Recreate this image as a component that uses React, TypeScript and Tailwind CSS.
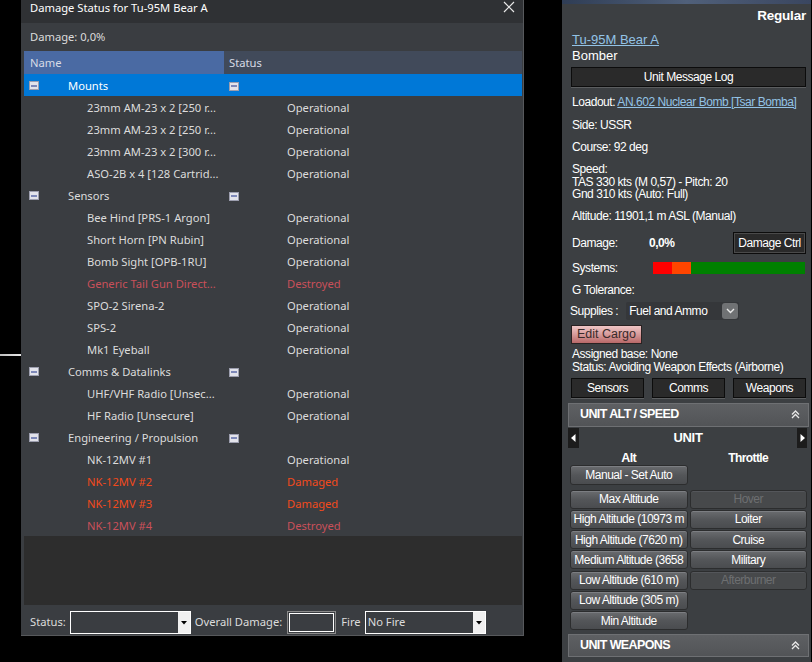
import React from "react";

type Row = { kind: "group" | "item"; name: string; status?: string; color?: string; selected?: boolean };

const DES = "#c9505a";
const DMG = "#f24a1c";

const rows: Row[] = [
  { kind: "group", name: "Mounts", selected: true },
  { kind: "item", name: "23mm AM-23 x 2 [250 r...", status: "Operational" },
  { kind: "item", name: "23mm AM-23 x 2 [250 r...", status: "Operational" },
  { kind: "item", name: "23mm AM-23 x 2 [300 r...", status: "Operational" },
  { kind: "item", name: "ASO-2B x 4 [128 Cartrid...", status: "Operational" },
  { kind: "group", name: "Sensors" },
  { kind: "item", name: "Bee Hind [PRS-1 Argon]", status: "Operational" },
  { kind: "item", name: "Short Horn [PN Rubin]", status: "Operational" },
  { kind: "item", name: "Bomb Sight [OPB-1RU]", status: "Operational" },
  { kind: "item", name: "Generic Tail Gun Direct...", status: "Destroyed", color: DES },
  { kind: "item", name: "SPO-2 Sirena-2", status: "Operational" },
  { kind: "item", name: "SPS-2", status: "Operational" },
  { kind: "item", name: "Mk1 Eyeball", status: "Operational" },
  { kind: "group", name: "Comms & Datalinks" },
  { kind: "item", name: "UHF/VHF Radio [Unsec...", status: "Operational" },
  { kind: "item", name: "HF Radio [Unsecure]", status: "Operational" },
  { kind: "group", name: "Engineering / Propulsion" },
  { kind: "item", name: "NK-12MV #1", status: "Operational" },
  { kind: "item", name: "NK-12MV #2", status: "Damaged", color: DMG },
  { kind: "item", name: "NK-12MV #3", status: "Damaged", color: DMG },
  { kind: "item", name: "NK-12MV #4", status: "Destroyed", color: DES },
];

function MinusBox() {
  return (
    <div className="w-[10px] h-[9px] bg-[#e2e3ea] border border-[#9c9eae] flex items-center justify-center">
      <div className="w-[6px] h-[2px] bg-[#7d88b8]" />
    </div>
  );
}

function DropArrow() {
  return (
    <div className="w-[12px] self-stretch bg-[#f0f0f0] flex items-center justify-center">
      <svg width="6" height="4" viewBox="0 0 6 4">
        <path d="M0 0h6L3 3.5z" fill="#000" />
      </svg>
    </div>
  );
}

function DarkBtn({ children, className = "" }: { children: React.ReactNode; className?: string }) {
  return (
    <div
      className={
        "h-[20px] bg-[#2a2a2a] border border-[#0c0c0c] shadow-[0_1px_0_#5c5e60] flex items-center justify-center text-white " +
        className
      }
    >
      {children}
    </div>
  );
}

function GrayBtn({ children, disabled = false }: { children: React.ReactNode; disabled?: boolean }) {
  return (
    <div
      className={
        "h-[19px] rounded-[3px] border border-[#2c2d2e] flex items-center justify-center overflow-hidden whitespace-nowrap tracking-[-0.5px] " +
        (disabled
          ? "bg-[#47494b] text-[#6d6f71] shadow-[inset_0_1px_0_#54565a]"
          : "bg-gradient-to-b from-[#6a6c6f] via-[#545659] to-[#4a4c4f] text-white shadow-[inset_0_1px_0_#7c7e82]")
      }
    >
      {children}
    </div>
  );
}

function DoubleChevron() {
  return (
    <svg width="9" height="9" viewBox="0 0 9 9" fill="none" stroke="#e8e8e8" strokeWidth="1.3">
      <path d="M1 4.5L4.5 1L8 4.5" />
      <path d="M1 8L4.5 4.5L8 8" />
    </svg>
  );
}

function SectionHeader({ title, h }: { title: string; h: string }) {
  return (
    <div
      className={
        h +
        " ml-[6px] mr-[2px] bg-gradient-to-b from-[#5e6063] to-[#525457] border border-[#6e7073] flex items-center justify-between pl-[11px] pr-[8px]"
      }
    >
      <span className="font-bold text-white text-[12.5px] tracking-[-0.6px]">{title}</span>
      <DoubleChevron />
    </div>
  );
}

export default function App() {
  return (
    <div className="w-[812px] h-[662px] bg-black flex overflow-hidden">
      {/* map area left */}
      <div className="w-[21px] shrink-0">
        <div className="mt-[354px] h-[2px] bg-gradient-to-r from-[#bdbdbd] to-[#e8e8e8]" />
      </div>

      {/* dialog */}
      <div className="w-[503px] h-[636px] shrink-0 bg-[#3a3d41] border-r border-b border-[#57595c] flex flex-col font-['Noto_Sans',sans-serif] text-[11.2px] text-[#dcdcdc]">
        <div className="h-[23px] bg-[#2f3134] flex items-start justify-between pl-[9px] pr-[8px]">
          <span className="leading-[16px] text-white">Damage Status for Tu-95M Bear A</span>
          <svg width="12" height="12" viewBox="0 0 12 12" className="mt-[1px]" stroke="#e8e8e8" strokeWidth="1.2">
            <path d="M1 1L11 11M11 1L1 11" />
          </svg>
        </div>
        <div className="h-[28px] flex items-center pl-[9px] pt-[1px]">Damage: 0,0%</div>

        <div className="ml-[3px] mr-[1px] flex flex-col">
          <div className="h-[23px] flex">
            <div className="w-[200px] bg-[#4a6aa3] flex items-center pl-[6px] pt-[1px] text-[#d8dce6]">Name</div>
            <div className="flex-1 bg-[#414a5a] flex items-center pl-[5px] pt-[1px] text-[#d8dce6]">Status</div>
          </div>
          {rows.map((r, i) => (
            <div
              key={i}
              className={"h-[22px] flex items-center pt-[2px] " + (r.selected ? "bg-[#0078d7] text-white" : "")}
              style={r.color ? { color: r.color } : undefined}
            >
              <div className="w-[200px] flex items-center">
                {r.kind === "group" ? (
                  <>
                    <div className="ml-[5px]">
                      <MinusBox />
                    </div>
                    <span className="ml-[29px] whitespace-nowrap">{r.name}</span>
                  </>
                ) : (
                  <span className="ml-[63px] whitespace-nowrap">{r.name}</span>
                )}
              </div>
              <div className="flex-1 flex items-center">
                {r.kind === "group" ? (
                  <div className="ml-[5px]">
                    <MinusBox />
                  </div>
                ) : (
                  <span className="ml-[63px]">{r.status}</span>
                )}
              </div>
            </div>
          ))}
          <div className="h-[69px] bg-[#2d2d2d]" />
        </div>

        <div className="flex-1 flex items-start pt-[6px] pl-[9px] gap-[4px]">
          <span className="h-[23px] flex items-center">Status:</span>
          <div className="w-[121px] h-[23px] border border-white bg-[#3a3d41] flex">
            <div className="flex-1" />
            <DropArrow />
          </div>
          <span className="h-[23px] flex items-center">Overall Damage:</span>
          <div className="w-[49px] h-[23px] border border-[#8a8a8a] p-[1px] ml-[1px]">
            <div className="w-full h-full border border-white" />
          </div>
          <span className="h-[23px] flex items-center ml-[1px]">Fire</span>
          <div className="w-[121px] h-[23px] border border-white bg-[#3a3d41] flex">
            <span className="flex-1 flex items-center pl-[2px]">No Fire</span>
            <DropArrow />
          </div>
        </div>
      </div>

      <div className="w-[38px] shrink-0" />

      {/* right panel */}
      <div className="w-[249px] shrink-0 h-[662px] bg-[#3c3f42] flex flex-col font-['Liberation_Sans',Arial,sans-serif] text-[12px] text-white tracking-[-0.45px]">
        <div className="h-[4px] bg-gradient-to-r from-[#2f3d55] via-[#50607a] to-[#3a4660]" />
        <div className="h-[24px] flex items-center justify-end pr-[5px] font-bold text-[13.5px] tracking-[-0.2px]">Regular</div>
        <div className="pl-[10px] mt-[5px] leading-[14px] text-[#93c3e6] underline text-[13px] tracking-normal">Tu-95M Bear A</div>
        <div className="pl-[10px] mt-[2px] leading-[14px] text-[13px] tracking-normal">Bomber</div>
        <div className="pl-[9px] pr-[5px] mt-[4px]">
          <DarkBtn>Unit Message Log</DarkBtn>
        </div>
        <div className="pl-[10px] mt-[8px] leading-[14px]">
          Loadout: <span className="text-[#93c3e6] underline">AN.602 Nuclear Bomb [Tsar Bomba]</span>
        </div>
        <div className="pl-[10px] mt-[9px] leading-[14px]">Side: USSR</div>
        <div className="pl-[10px] mt-[8px] leading-[14px]">Course: 92 deg</div>
        <div className="pl-[10px] mt-[9px] leading-[12.5px]">
          <div>Speed:</div>
          <div>TAS 330 kts (M 0,57) - Pitch: 20</div>
          <div>Gnd 310 kts (Auto: Full)</div>
        </div>
        <div className="pl-[10px] mt-[8px] leading-[14px]">Altitude: 11901,1 m ASL (Manual)</div>
        <div className="pl-[10px] pr-[5px] mt-[9px] h-[23px] flex items-center">
          <span className="w-[77px]">Damage:</span>
          <span className="font-bold">0,0%</span>
          <div className="ml-auto w-[73px] h-[22px] bg-[#2a2a2a] border border-[#0c0c0c] shadow-[inset_0_0_0_1px_#4a4a4a] flex items-center justify-center">
            Damage Ctrl
          </div>
        </div>
        <div className="pl-[10px] pr-[6px] mt-[7px] h-[12px] flex items-center">
          <span className="w-[81px]">Systems:</span>
          <div className="flex-1 h-[12px] flex">
            <div className="w-[19px] bg-[#ff0000]" />
            <div className="w-[19px] bg-[#ff4500]" />
            <div className="flex-1 bg-[#008000]" />
          </div>
        </div>
        <div className="pl-[10px] mt-[9px] leading-[14px]">G Tolerance:</div>
        <div className="pl-[8px] mt-[5px] h-[18px] flex items-center">
          <span>Supplies :</span>
          <div className="ml-[8px] w-[113px] h-[18px] bg-[#35373a] rounded-[2px] flex items-center pl-[3px] pr-[1px]">
            <span className="flex-1">Fuel and Ammo</span>
            <div className="w-[16px] h-[16px] rounded-[3px] bg-[#707274] flex items-center justify-center">
              <svg width="9" height="6" viewBox="0 0 9 6" fill="none" stroke="#e8e8e8" strokeWidth="1.4">
                <path d="M1 1l3.5 3.5L8 1" />
              </svg>
            </div>
          </div>
        </div>
        <div className="pl-[9px] mt-[5px]">
          <div className="w-[71px] h-[19px] border border-[#2a2222] bg-gradient-to-b from-[#efc6c6] via-[#d79a9a] to-[#b86868] flex items-center justify-center text-[#3a2a2a] text-[12.5px] tracking-normal">
            Edit Cargo
          </div>
        </div>
        <div className="pl-[10px] mt-[4px] leading-[13px]">
          <div>Assigned base: None</div>
          <div>Status: Avoiding Weapon Effects (Airborne)</div>
        </div>
        <div className="pl-[9px] pr-[5px] mt-[4px] grid grid-cols-3 gap-[8px]">
          <DarkBtn>Sensors</DarkBtn>
          <DarkBtn>Comms</DarkBtn>
          <DarkBtn>Weapons</DarkBtn>
        </div>
        <div className="mt-[5px]">
          <SectionHeader title="UNIT ALT / SPEED" h="h-[24px]" />
        </div>
        <div className="h-[22px] ml-[6px] mr-[4px] flex items-stretch">
          <div className="w-[11px] my-[1px] bg-[#1c1c1c] flex items-center justify-center">
            <svg width="5" height="8" viewBox="0 0 5 8"><path d="M4.5 0v8L0 4z" fill="#fff" /></svg>
          </div>
          <div className="flex-1 flex items-center justify-center font-bold text-[13px] tracking-[-0.3px]">UNIT</div>
          <div className="w-[10px] my-[1px] bg-[#1c1c1c] flex items-center justify-center">
            <svg width="5" height="8" viewBox="0 0 5 8"><path d="M0.5 0v8L5 4z" fill="#fff" /></svg>
          </div>
        </div>
        <div className="ml-[8px] mr-[4px] grid grid-cols-2 gap-x-[2px] font-bold tracking-[-0.6px] h-[15px] items-center">
          <div className="text-center text-[12.5px]">Alt</div>
          <div className="text-center">Throttle</div>
        </div>
        <div className="ml-[8px] mr-[4px] mt-[1px] grid grid-cols-2 gap-x-[2px]">
          <div className="h-[20px] rounded-[3px] border border-[#2c2d2e] flex items-center justify-center whitespace-nowrap tracking-[-0.5px] bg-gradient-to-b from-[#6a6c6f] via-[#545659] to-[#4a4c4f] shadow-[inset_0_1px_0_#7c7e82]">
            Manual - Set Auto
          </div>
          <div />
        </div>
        <div className="ml-[8px] mr-[4px] mt-[5px] grid grid-cols-2 gap-x-[2px] gap-y-[1.3px]">
          <GrayBtn>Max Altitude</GrayBtn>
          <GrayBtn disabled>Hover</GrayBtn>
          <GrayBtn>High Altitude (10973 m</GrayBtn>
          <GrayBtn>Loiter</GrayBtn>
          <GrayBtn>High Altitude (7620 m)</GrayBtn>
          <GrayBtn>Cruise</GrayBtn>
          <GrayBtn>Medium Altitude (3658</GrayBtn>
          <GrayBtn>Military</GrayBtn>
          <GrayBtn>Low Altitude (610 m)</GrayBtn>
          <GrayBtn disabled>Afterburner</GrayBtn>
          <GrayBtn>Low Altitude (305 m)</GrayBtn>
          <div />
          <GrayBtn>Min Altitude</GrayBtn>
          <div />
        </div>
        <div className="mt-[4px]">
          <SectionHeader title="UNIT WEAPONS" h="h-[23px]" />
        </div>
      </div>
    </div>
  );
}
